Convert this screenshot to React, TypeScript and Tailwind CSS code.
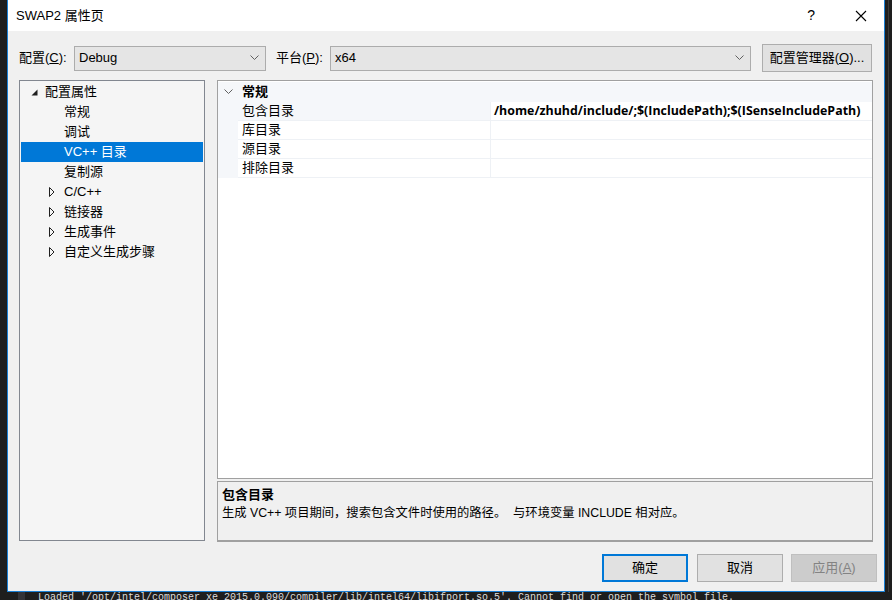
import { useState } from "react";

const FONT = { fontFamily: '"Liberation Sans", "Noto Sans CJK SC", sans-serif' };

const treeItems = [
  { label: "常规", kind: "leaf" },
  { label: "调试", kind: "leaf" },
  { label: "VC++ 目录", kind: "leaf" },
  { label: "复制源", kind: "leaf" },
  { label: "C/C++", kind: "folder" },
  { label: "链接器", kind: "folder" },
  { label: "生成事件", kind: "folder" },
  { label: "自定义生成步骤", kind: "folder" },
];

const props = [
  { name: "包含目录", value: "/home/zhuhd/include/;$(IncludePath);$(ISenseIncludePath)" },
  { name: "库目录", value: "" },
  { name: "源目录", value: "" },
  { name: "排除目录", value: "" },
];

const Chevron = () => (
  <svg width="9" height="6" viewBox="0 0 9 6" className="shrink-0">
    <path d="M0.5 0.5 L4.5 4.5 L8.5 0.5" fill="none" stroke="#606060" strokeWidth="1" />
  </svg>
);

const Combo = ({ value, width }: { value: string; width: string }) => (
  <div className={`${width} h-[25px] bg-[#e5e5e5] border border-[#acacac] flex items-center justify-between pl-[4px] pr-[6px]`}>
    <span className="text-[13px] text-black">{value}</span>
    <Chevron />
  </div>
);

export default function App() {
  const [selected, setSelected] = useState(2);
  const [selectedProp, setSelectedProp] = useState(0);

  return (
    <div className="w-[892px] h-[600px] bg-[#1e1e1e] overflow-hidden flex flex-col" style={FONT}>
      <div className="flex h-[592px] shrink-0">
        <div className="w-[7px] bg-[#1e1e1e]" />
        <div className="w-[878px] h-[592px] border-l border-r border-b border-[#1a7fd4] bg-[#f0f0f0] flex flex-col">
          {/* title bar */}
          <div className="h-[31px] bg-white flex items-center shrink-0">
            <span className="ml-[8px] text-[13px] text-black">SWAP2 属性页</span>
            <div className="flex-1" />
            <span className="text-[14px] text-black mr-[40px]">?</span>
            <svg width="12" height="12" viewBox="0 0 12 12" className="mr-[17px]">
              <path d="M1 1 L11 11 M11 1 L1 11" stroke="#000" strokeWidth="1.1" />
            </svg>
          </div>

          {/* config row */}
          <div className="flex items-center h-[28px] mt-[13px] shrink-0">
            <span className="ml-[11px] w-[55px] text-[13px] text-black">
              配置(<span className="underline">C</span>):
            </span>
            <Combo value="Debug" width="w-[192px]" />
            <span className="ml-[10px] w-[54px] text-[13px] text-black">
              平台(<span className="underline">P</span>):
            </span>
            <Combo value="x64" width="w-[421px]" />
            <div className="ml-[11px] w-[110px] h-[28px] bg-[#e1e1e1] border border-[#adadad] flex items-center justify-center text-[13px] text-black">
              配置管理器(<span className="underline">O</span>)...
            </div>
          </div>

          {/* main */}
          <div className="flex mt-[8px] shrink-0 h-[462px]">
            {/* tree */}
            <div className="ml-[11px] w-[186px] h-[461px] border border-[#828790] bg-[#f5f5f5] pt-[1px] px-[1px]">
              <div className="h-[20px] flex items-center">
                <svg width="7" height="7" viewBox="0 0 7 7" className="ml-[10px]">
                  <path d="M6.5 0.5 L6.5 6.5 L0.5 6.5 Z" fill="#1e1e1e" />
                </svg>
                <span className="ml-[7px] text-[13px] text-black">配置属性</span>
              </div>
              {treeItems.map((it, i) => (
                <div
                  key={it.label}
                  onClick={() => setSelected(i)}
                  className={`h-[20px] flex items-center ${selected === i ? "bg-[#0078d7] text-white" : "text-black"}`}
                >
                  <div className="w-[43px] flex justify-end pr-[9px]">
                    {it.kind === "folder" && (
                      <svg width="6" height="10" viewBox="0 0 6 10">
                        <path d="M0.5 0.5 L5 5 L0.5 9.5 Z" fill="none" stroke="#1e1e1e" strokeWidth="1" />
                      </svg>
                    )}
                  </div>
                  <span className="text-[13px]">{it.label}</span>
                </div>
              ))}
            </div>

            {/* right column */}
            <div className="ml-[12px] w-[656px] flex flex-col">
              <div className="h-[399px] border border-[#a0a0a0] bg-white flex flex-col">
                <div className="flex pt-[1px]">
                  <div className="w-[20px] bg-[#f5f7fa] flex flex-col">
                    <div className="h-[20px] flex items-center justify-center">
                      <Chevron />
                    </div>
                    <div className="h-[76px]" />
                  </div>
                  <div className="flex-1 flex flex-col">
                    <div className="h-[20px] bg-[#f5f7fa] flex items-center pl-[4px]">
                      <span className="text-[13px] font-bold text-black">常规</span>
                    </div>
                    {props.map((p, i) => (
                      <div key={p.name} onClick={() => setSelectedProp(i)} className="h-[19px] flex border-b border-[#eef1f5]">
                        <div className={`w-[253px] border-r border-[#eef1f5] flex items-center pl-[4px] ${selectedProp === i ? "bg-[#f5f7fa]" : "bg-white"}`}>
                          <span className="text-[13px] text-black">{p.name}</span>
                        </div>
                        <div className="flex-1 flex items-center pl-[3px] bg-white">
                          <span className="text-[12.4px] font-bold text-black whitespace-nowrap" style={{ fontFamily: '"Open Sans", "Noto Sans CJK SC", sans-serif' }}>
                            {p.value}
                          </span>
                        </div>
                      </div>
                    ))}
                  </div>
                </div>
              </div>
              <div className="mt-[2px] h-[61px] border border-[#a0a0a0] border-b-2 bg-[#f0f0f0] px-[4px] pt-[4px] flex flex-col">
                <span className="text-[13px] font-bold text-black leading-[17px]">包含目录</span>
                <span className="text-[12.3px] text-black leading-[17px] mt-[2px] whitespace-pre">
                  生成 VC++ 项目期间，搜索包含文件时使用的路径。  与环境变量 INCLUDE 相对应。
                </span>
              </div>
            </div>
          </div>

          {/* buttons */}
          <div className="flex mt-[12px] shrink-0">
            <div className="ml-[594px] w-[86px] h-[28px] bg-[#e1e1e1] border-2 border-[#0078d7] flex items-center justify-center text-[13px] text-black">
              确定
            </div>
            <div className="ml-[9px] w-[86px] h-[28px] bg-[#e1e1e1] border border-[#adadad] flex items-center justify-center text-[13px] text-black">
              取消
            </div>
            <div className="ml-[8px] w-[86px] h-[28px] bg-[#cccccc] border border-[#bfbfbf] flex items-center justify-center text-[13px] text-[#838383]">
              应用(<span className="underline">A</span>)
            </div>
          </div>
        </div>
        <div className="w-[3px]" />
        <div className="w-[1px] bg-[#3a3a3a]" />
      </div>
      <div className="h-[8px] overflow-hidden flex">
        <div className="w-[18px]" />
        <div className="w-[7px] bg-[#333337]" />
        <div
          className="ml-[13px] text-[10px] leading-[10px] text-[#dcdcdc] whitespace-pre mt-[1px]"
          style={{ fontFamily: '"Liberation Mono", monospace' }}
        >
          Loaded '/opt/intel/composer_xe_2015.0.090/compiler/lib/intel64/libifport.so.5'. Cannot find or open the symbol file.
        </div>
      </div>
    </div>
  );
}
